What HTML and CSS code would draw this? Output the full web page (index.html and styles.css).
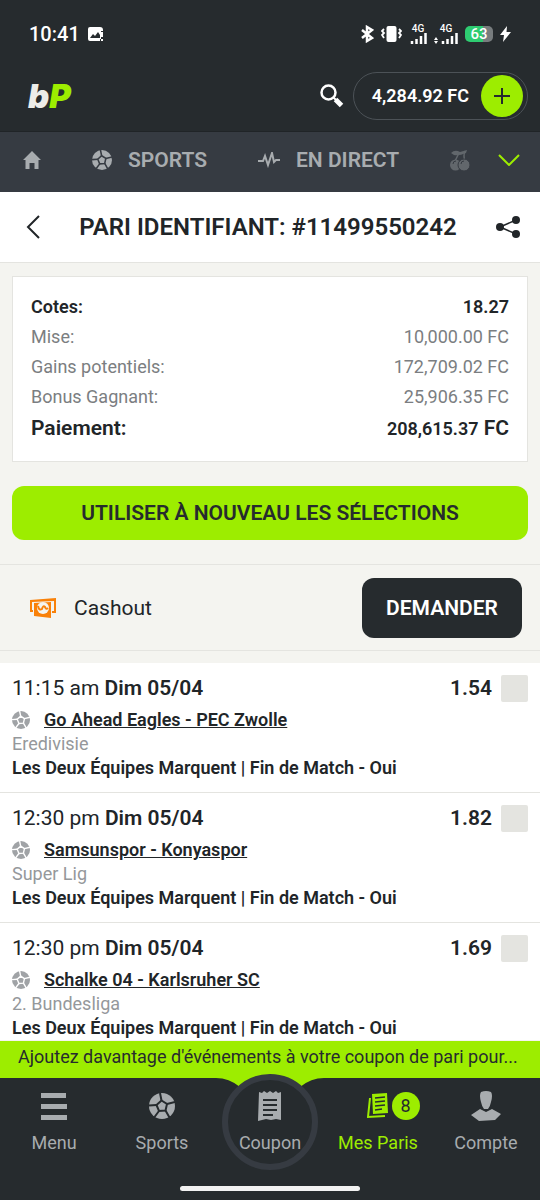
FILE: index.html
```
<!DOCTYPE html>
<html lang="fr">
<head>
  <meta charset="UTF-8">
  <meta name="viewport" content="width=device-width, initial-scale=1">
  <title>Pari identifiant: #11499550242</title>
  <link rel="stylesheet" href="styles.css">
</head>
<body>

  <svg class="sprite" aria-hidden="true">
    <symbol id="ball" viewBox="0 0 26 26">
      <circle cx="13" cy="13" r="13" fill="currentColor"/>
      <path d="M12.500 7.500l5.500 3.500-1.500 6.500-6.500.500-2.500-6z" fill="currentColor" stroke="var(--bg)" stroke-width="2"/>
      <path d="M12.500 7.500L11 0M18 11l8-2M16.500 17.500l4 7M10 18l-4.500 6M7.500 12L0 12.500" stroke="var(--bg)" stroke-width="2"/>
    </symbol>
  </svg>

  <div class="status">
    <span class="clock">10:41</span>
    <svg width="16" height="15" viewBox="0 0 16 15"><path d="M2 0h10q3 0 3 3v1h-2v8h-1v2H2q-2 0-2-2V2q0-2 2-2z" fill="#fff"/><path d="M2 11l3-4 2 2 3-4 2 3v3z" fill="#262b2e"/><path d="M14 5v5M14 12v2" stroke="#fff" stroke-width="2"/></svg>
    <div class="status-right">
      <svg width="13" height="18" viewBox="0 0 13 18" fill="none" stroke="#fff" stroke-width="2.500"><path d="M1 5l10 8-5 3V2l5 3-10 8"/></svg>
      <svg width="21" height="18" viewBox="0 0 21 18"><rect x="5.500" y="1" width="10" height="16" rx="2" fill="#fff"/><path d="M3 4L1 6l2 2-2 2 2 3M18 4l2 2-2 2 2 2-2 3" fill="none" stroke="#fff" stroke-width="1.800"/></svg>
      <div class="signal"><span>4G</span><svg width="18" height="11" viewBox="0 0 18 11" stroke="#fff" stroke-width="2.500"><path d="M3 8v3M7.500 6v5M12 3v8M16.500 0v11"/></svg></div>
      <div class="signal"><span>4G</span><svg width="24" height="11" viewBox="0 0 24 11" stroke="#fff" stroke-width="2.500"><path d="M9 8v3M13.500 6v5M18 3v8M22.500 0v11"/><path d="M0 7l2-3 2 3zM0 8l2 3 2-3z" fill="#fff" stroke="none"/></svg></div>
      <span class="battery">63</span>
      <svg width="11" height="16" viewBox="0 0 11 16"><path d="M7 0L0 9h4l-1 7 8-10H6.500z" fill="#fff"/></svg>
    </div>
  </div>

  <header class="topbar">
    <a href="#" class="logo">b<span>P</span></a>
    <button class="icon-btn" aria-label="Recherche">
      <svg width="24" height="24" viewBox="0 0 24 24" fill="none" stroke="#fff"><circle cx="8.500" cy="8.500" r="7" stroke-width="2.500"/><path d="M13 13l3 3" stroke-width="2"/><path d="M15.500 15.500l6 6" stroke-width="5"/></svg>
    </button>
    <div class="balance">
      <span>4,284.92 FC</span>
      <button class="deposit" aria-label="Dépôt"><svg width="16" height="16" viewBox="0 0 16 16" stroke="#262b2e" stroke-width="2"><path d="M8 0v16M0 8h16"/></svg></button>
    </div>
  </header>

  <nav class="tabs">
    <a href="#" aria-label="Accueil"><svg width="18" height="18" viewBox="0 0 18 18"><path d="M9 0l9 9h-2.500v9h-4v-6h-5v6h-4V9H0z" fill="currentColor"/></svg></a>
    <a href="#"><svg width="20" height="20"><use href="#ball"/></svg>SPORTS</a>
    <a href="#"><svg width="22" height="16" viewBox="0 0 22 16" fill="none" stroke="currentColor" stroke-width="2"><path d="M0 9h5l2-5 3 9 4-12 2 9 2-2h4"/></svg>EN DIRECT</a>
    <a href="#" class="casino" aria-label="Casino"><svg width="20" height="21" viewBox="0 0 20 21"><path d="M1 3Q5-1 10 2l7-2-1 3Q9 6 4 5z" fill="currentColor"/><path d="M9 3L5 11M15 1q-2 5 0 10" stroke="currentColor" stroke-width="1.500" fill="none"/><circle cx="5.500" cy="15" r="5.500" fill="currentColor"/><circle cx="14" cy="15" r="6" fill="currentColor" stroke="#363b42"/><path d="M3 14q0-3 3-3M11 14q0-3 3-3" stroke="#363b42" fill="none"/></svg></a>
    <button class="icon-btn more" aria-label="Plus"><svg width="22" height="12" viewBox="0 0 22 12" fill="none" stroke="#9ded00" stroke-width="2"><path d="M1 1l10 10L21 1"/></svg></button>
  </nav>

  <div class="title">
    <button class="icon-btn" aria-label="Retour"><svg width="14" height="24" viewBox="0 0 14 24" fill="none" stroke="#212528" stroke-width="2"><path d="M13 1L2 12l11 11"/></svg></button>
    <h1>PARI IDENTIFIANT: #11499550242</h1>
    <button class="icon-btn" aria-label="Partager"><svg width="24" height="22" viewBox="0 0 24 22" fill="#212528"><path d="M20 4L4 11l16 7" fill="none" stroke="#212528" stroke-width="1.500"/><circle cx="4" cy="11" r="4"/><circle cx="20" cy="4" r="4"/><circle cx="20" cy="18" r="4"/></svg></button>
  </div>

  <main>
    <dl class="summary">
      <div class="strong"><dt>Cotes:</dt><dd>18.27</dd></div>
      <div><dt>Mise:</dt><dd>10,000.00 FC</dd></div>
      <div><dt>Gains potentiels:</dt><dd>172,709.02 FC</dd></div>
      <div><dt>Bonus Gagnant:</dt><dd>25,906.35 FC</dd></div>
      <div class="strong payout"><dt>Paiement:</dt><dd><span>208,615.37</span> FC</dd></div>
    </dl>

    <button class="reuse">UTILISER À NOUVEAU LES SÉLECTIONS</button>

    <section class="cashout">
      <svg width="26" height="20" viewBox="0 0 26 20"><path d="M0 2l26-2v15h-4v-2h2V3L2 4v8h1v2H0z" fill="#f98109"/><path d="M4 5l17-1v16L4 18z" fill="#f98109"/><circle cx="13" cy="10" r="6" fill="#f4f4f0"/><path d="M8 8q1 5 4 3 1-4 3-2 1 3 3 1" fill="none" stroke="#f98109" stroke-width="2"/></svg>
      <span>Cashout</span>
      <button>DEMANDER</button>
    </section>

    <div class="bets">
      <article class="bet">
        <div class="bet-head">
          <span>11:15 am <b>Dim 05/04</b></span>
          <b class="odds">1.54</b>
          <input type="checkbox" aria-labelledby="m1">
        </div>
        <div class="teams"><svg width="18" height="18"><use href="#ball"/></svg><a href="#" id="m1">Go Ahead Eagles - PEC Zwolle</a></div>
        <div class="league">Eredivisie</div>
        <div class="market">Les Deux Équipes Marquent | Fin de Match - Oui</div>
      </article>
      <article class="bet">
        <div class="bet-head">
          <span>12:30 pm <b>Dim 05/04</b></span>
          <b class="odds">1.82</b>
          <input type="checkbox" aria-labelledby="m2">
        </div>
        <div class="teams"><svg width="18" height="18"><use href="#ball"/></svg><a href="#" id="m2">Samsunspor - Konyaspor</a></div>
        <div class="league">Super Lig</div>
        <div class="market">Les Deux Équipes Marquent | Fin de Match - Oui</div>
      </article>
      <article class="bet">
        <div class="bet-head">
          <span>12:30 pm <b>Dim 05/04</b></span>
          <b class="odds">1.69</b>
          <input type="checkbox" aria-labelledby="m3">
        </div>
        <div class="teams"><svg width="18" height="18"><use href="#ball"/></svg><a href="#" id="m3">Schalke 04 - Karlsruher SC</a></div>
        <div class="league">2. Bundesliga</div>
        <div class="market">Les Deux Équipes Marquent | Fin de Match - Oui</div>
      </article>
    </div>
  </main>

  <footer>
    <div class="promo">Ajoutez davantage d'événements à votre coupon de pari pour...</div>
    <nav class="bottom-nav">
      <a href="#"><svg width="26" height="28" viewBox="0 0 26 28" fill="currentColor"><path d="M0 1h25v5H0zM0 12h26v5H0zM0 23h26v5H0z"/></svg>Menu</a>
      <a href="#"><svg width="26" height="26"><use href="#ball"/></svg>Sports</a>
      <a href="#" class="coupon">
        <svg class="notch" width="108" height="10" viewBox="0 0 108 10"><path d="M0 0q13 0 24 9h60q11-9 24-9z" fill="#9ded00"/></svg>
        <span class="ring"></span>
        <svg class="slip" width="24" height="32" viewBox="0 0 24 32"><path d="M1 2l3 1 2-2 3 2 3-2 3 2 3-2 2 2 3-1v28l-5-1-5 1-5-1-4 1-4 1z" fill="currentColor"/><path d="M5 10h14M5 15h14M5 20h14M5 25h10" stroke="#262b2e" stroke-width="2"/></svg>
        Coupon
      </a>
      <a href="#" class="active">
        <span class="with-badge">
          <svg width="22" height="26" viewBox="0 0 22 26"><path d="M5 1l15-1 1 20-15 1z" fill="currentColor"/><path d="M3 5L1 24l17-1" fill="none" stroke="currentColor" stroke-width="2"/><path d="M8 5l10-1M8 9l10-1M8 13l10-1M8 17l7-1" stroke="#262b2e" stroke-width="1.500"/></svg>
          <span class="badge">8</span>
        </span>
        Mes Paris
      </a>
      <a href="#"><svg width="30" height="30" viewBox="0 0 30 30" fill="currentColor"><path d="M10 1q5-2 10 0 2 3 0 10-1 5-3 7h-4q-2-2-3-7-2-7 0-10z"/><path d="M9 18l6 3 6-3 9 5-6 6-16 1-8-6z"/></svg>Compte</a>
    </nav>
    <div class="home-bar"></div>
  </footer>

</body>
</html>
```
FILE: styles.css
```
* { box-sizing: border-box; }
body {
  --bg: #262b2e;
  margin: 0;
  min-height: 100vh;
  display: flex;
  flex-direction: column;
  font-family: Roboto, "Liberation Sans", sans-serif;
  font-size: 18px;
  line-height: 24px;
  color: #212528;
  background: #f4f4f0;
}
a { color: inherit; text-decoration: none; }
button { font: inherit; border: 0; cursor: pointer; }
svg { display: block; flex: none; }
b { font-weight: 600; }
.sprite { position: absolute; width: 0; height: 0; }
.icon-btn { background: none; padding: 0; }

/* phone status bar */
.status { display: flex; align-items: center; gap: 8px; height: 68px; padding: 0 29px; background: #262b2e; color: #fff; }
.clock { font-size: 20px; font-weight: 500; }
.status-right { display: flex; align-items: center; gap: 7px; margin-left: auto; }
.signal { display: flex; flex-direction: column; align-items: center; font-size: 10px; line-height: 8px; font-weight: 500; }
.battery { width: 28px; border-radius: 5px; background: linear-gradient(90deg, #2ecc71 63%, #777c7e 63%); font-size: 15px; line-height: 16px; font-weight: 500; text-align: center; }

/* header */
.topbar { display: flex; align-items: center; height: 64px; padding: 0 12px 8px 28px; background: #262b2e; color: #fff; border-bottom: 1px solid #202427; }
.logo { margin-right: auto; font-family: Inter, sans-serif; font-size: 33px; font-weight: 900; font-style: italic; line-height: 40px; color: #ecece8; }
.logo span { color: #9ded00; }
.balance { display: flex; align-items: center; gap: 12px; height: 48px; margin-left: 9px; padding: 0 4px 0 18px; border: 1px solid #4c5257; border-radius: 24px; font-weight: 600; }
.deposit { display: flex; align-items: center; justify-content: center; width: 42px; height: 42px; border-radius: 50%; background: #9ded00; padding: 0; }

/* sports tabs */
.tabs { --bg: #363b42; display: flex; align-items: center; height: 60px; padding: 0 20px 4px 23px; background: #363b42; color: #a8acaf; font-size: 21px; font-weight: 600; }
.tabs a { display: flex; align-items: center; gap: 16px; margin-right: 51px; white-space: nowrap; }
.tabs .casino { margin-right: 0; color: #62676c; }
.more { margin-left: auto; }

.title { display: flex; align-items: center; justify-content: space-between; height: 71px; padding: 0 20px 0 26px; background: #fff; border-bottom: 1px solid #e4e4e0; }
h1 { margin: 0; font-size: 24px; font-weight: 600; line-height: 28px; }

main { flex: 1; }

.summary { margin: 13px 12px 24px; padding: 15px 18px 16px; background: #fff; border: 1px solid #e4e4e0; }
.summary div { display: flex; justify-content: space-between; line-height: 30px; color: #7b7e81; }
.summary dd { margin: 0; }
.summary .strong { color: #212528; font-weight: 600; }
.summary .payout { font-size: 21px; line-height: 33px; }
.payout span { font-size: 18px; }

.reuse { display: block; width: calc(100% - 24px); height: 54px; margin: 0 12px 24px; border-radius: 12px; background: #9ded00; color: #262b2e; font-size: 21px; font-weight: 600; }

.cashout { display: flex; align-items: center; gap: 18px; height: 87px; margin-bottom: 12px; padding: 0 18px 0 30px; border: solid #e4e4e0; border-width: 1px 0; font-size: 21px; }
.cashout button { width: 160px; height: 60px; margin-left: auto; border-radius: 12px; background: #262b2e; color: #fff; font-weight: 600; }

/* selections */
.bet { --bg: #fff; padding: 11px 12px 12px; background: #fff; border-bottom: 1px solid #e4e4e0; }
.bet:last-child { padding-bottom: 0; border-bottom: 0; }
.bet-head { display: flex; align-items: center; height: 28px; margin-bottom: 6px; font-size: 21px; }
.odds { margin-left: auto; }
.bet-head input { appearance: none; width: 27px; height: 27px; margin: 0 0 0 9px; border-radius: 2px; background: #e4e4e0; }
.teams { display: flex; align-items: center; gap: 14px; font-weight: 600; }
.teams a { text-decoration: underline; }
.teams svg { color: #a0a3a6; }
.league { color: #95989b; }
.market { font-weight: 600; }

/* bottom bar */
footer { position: sticky; bottom: 0; padding-bottom: 9px; background: #262b2e; }
.promo { padding: 4px 18px 9px; background: #9ded00; color: #262b2e; white-space: nowrap; overflow: hidden; text-overflow: ellipsis; }
.bottom-nav { display: grid; grid-template-columns: repeat(5, 1fr); height: 108px; color: #a8acaf; }
.bottom-nav a { position: relative; display: grid; grid-template-rows: 55px 20px; justify-items: center; align-items: center; align-content: start; line-height: 20px; }
.bottom-nav .active { color: #9ded00; }
.coupon { isolation: isolate; }
.notch { position: absolute; top: 0; left: 50%; margin-left: -54px; z-index: -1; }
.ring { position: absolute; top: -4px; left: 50%; width: 96px; height: 96px; margin-left: -48px; border: 6px solid #363b42; border-radius: 50%; background: #262b2e; z-index: -1; }
.with-badge { display: flex; align-items: center; gap: 3px; margin-left: 30px; }
.badge { width: 28px; border-radius: 50%; background: #9ded00; color: #262b2e; line-height: 28px; text-align: center; }
.home-bar { width: 33.33%; height: 5px; margin: 0 auto; border-radius: 3px; background: #f2f2f2; }
```
